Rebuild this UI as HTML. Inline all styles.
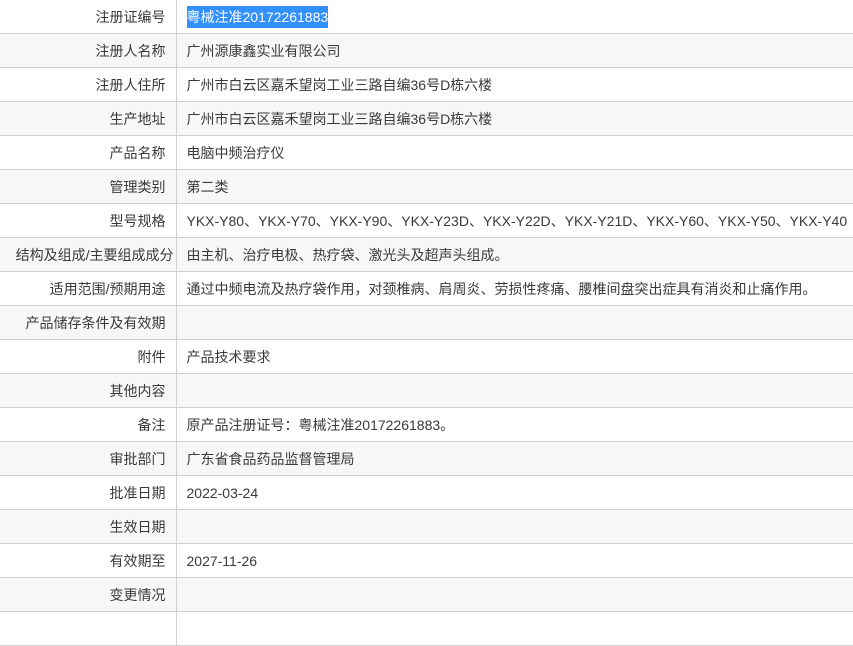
<!DOCTYPE html><html><head><meta charset="utf-8"><style>
body{margin:0;background:#fff;font-family:"Liberation Sans","Noto Sans CJK SC",sans-serif;font-size:14px;color:#3a3a3a;}
table{border-collapse:collapse;width:853px;table-layout:fixed}
td{height:33px;border-bottom:1px solid #d0d0d0;padding:0;white-space:nowrap;overflow:hidden}
td.l{width:165px;text-align:right;padding-right:10px;border-right:1px solid #d0d0d0}
td.v{padding-left:10px}
tr:nth-child(even) td{background:#f7f7f7}
.sel{background:#3390ff;color:#fff;padding:3px 0}
</style></head><body><table>
<colgroup><col style="width:176px"><col></colgroup>
<tr><td class="l">注册证编号</td><td class="v"><span class="sel">粤械注准20172261883</span></td></tr>
<tr><td class="l">注册人名称</td><td class="v">广州源康鑫实业有限公司</td></tr>
<tr><td class="l">注册人住所</td><td class="v">广州市白云区嘉禾望岗工业三路自编36号D栋六楼</td></tr>
<tr><td class="l">生产地址</td><td class="v">广州市白云区嘉禾望岗工业三路自编36号D栋六楼</td></tr>
<tr><td class="l">产品名称</td><td class="v">电脑中频治疗仪</td></tr>
<tr><td class="l">管理类别</td><td class="v">第二类</td></tr>
<tr><td class="l">型号规格</td><td class="v">YKX-Y80、YKX-Y70、YKX-Y90、YKX-Y23D、YKX-Y22D、YKX-Y21D、YKX-Y60、YKX-Y50、YKX-Y40</td></tr>
<tr><td class="l" style="padding-right:2px">结构及组成/主要组成成分</td><td class="v">由主机、治疗电极、热疗袋、激光头及超声头组成。</td></tr>
<tr><td class="l">适用范围/预期用途</td><td class="v">通过中频电流及热疗袋作用，对颈椎病、肩周炎、劳损性疼痛、腰椎间盘突出症具有消炎和止痛作用。</td></tr>
<tr><td class="l">产品储存条件及有效期</td><td class="v"></td></tr>
<tr><td class="l">附件</td><td class="v">产品技术要求</td></tr>
<tr><td class="l">其他内容</td><td class="v"></td></tr>
<tr><td class="l">备注</td><td class="v">原产品注册证号：粤械注准20172261883。</td></tr>
<tr><td class="l">审批部门</td><td class="v">广东省食品药品监督管理局</td></tr>
<tr><td class="l">批准日期</td><td class="v">2022-03-24</td></tr>
<tr><td class="l">生效日期</td><td class="v"></td></tr>
<tr><td class="l">有效期至</td><td class="v">2027-11-26</td></tr>
<tr><td class="l">变更情况</td><td class="v"></td></tr>
<tr><td class="l"></td><td class="v"></td></tr>
</table></body></html>
